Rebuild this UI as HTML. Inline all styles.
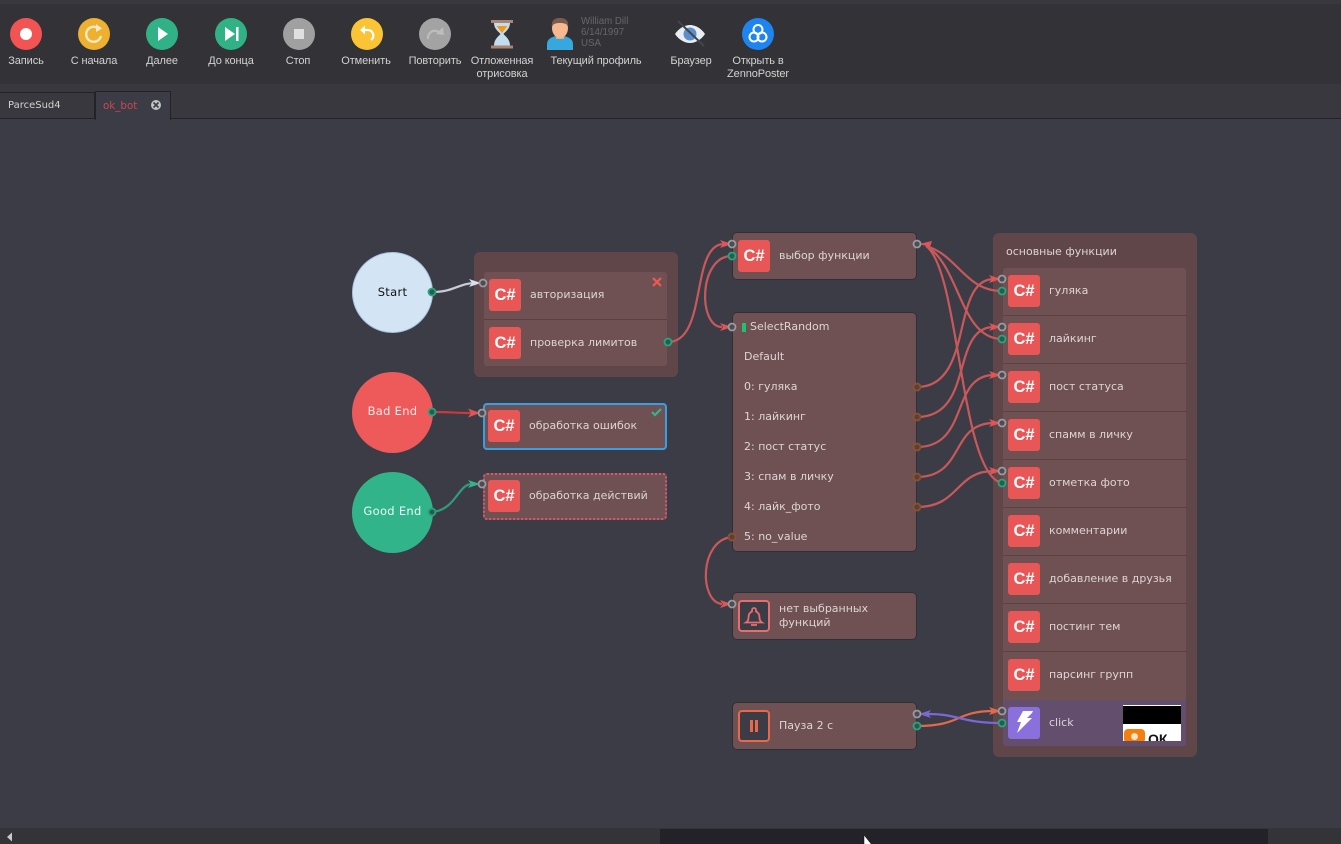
<!DOCTYPE html>
<html><head><meta charset="utf-8"><style>
html,body{margin:0;padding:0;background:#3c3c46}
#r{position:relative;width:1341px;height:844px;overflow:hidden;background:#3c3c46;font-family:"DejaVu Sans","Liberation Sans",sans-serif}
#r div{position:absolute;box-sizing:border-box}
.l{font:11px/13px "Liberation Sans",sans-serif;letter-spacing:-.1px;color:#d2d2d2;text-align:center;white-space:nowrap;transform:translateX(-50%)}
.n{background:#6f5153;border-radius:4px;box-shadow:0 0 0 1px #2f2f35}
.c{width:32px;height:32px;background:#e85656;border-radius:3px;color:#fff;font:bold 16.5px/32px "Liberation Sans",sans-serif;text-align:center}
.t{font-size:11px;line-height:14px;color:#dcd6d4;white-space:nowrap}
.circ{width:81px;height:81px;border-radius:50%;text-align:center;line-height:78px;font-size:11.5px;letter-spacing:.3px}
.d{height:1px;background:#5a4144}
</style></head><body><div id="r">
<div style="left:0;top:0;width:1341px;height:4px;background:#38383e"></div>
<div style="left:0;top:4px;width:1341px;height:80px;background:#333337"></div>
<div style="left:0;top:84px;width:1341px;height:34px;background:#38383e"></div>
<div style="left:0;top:118px;width:1341px;height:1px;background:#232327"></div>
<div style="left:0;top:92px;width:95px;height:27px;background:#38383e;border:1px solid #232327;border-left:0"></div>
<div style="left:95px;top:91px;width:76px;height:29px;background:#3c3c46;border:1px solid #232327;border-bottom:0"></div>
<div style="left:8px;top:99px;font-size:10px;line-height:14px;color:#d2d2d2">ParceSud4</div>
<div style="left:103px;top:99px;font-size:10.3px;line-height:14px;color:#c9484f">ok_bot</div>

<svg style="position:absolute;left:0;top:0" width="800" height="118">
<circle cx="26" cy="34" r="16" fill="#f25454"/><circle cx="26" cy="34" r="6" fill="#fff"/>
<circle cx="94" cy="34" r="16" fill="#edb02f"/><path d="M99 29A7.500 7.500 0 1 0 101 36" fill="none" stroke="#f6e9c8" stroke-width="2.400"/><path d="M96 24l6 4.500-6 3.500z" fill="#f6e9c8"/>
<circle cx="162" cy="34" r="16" fill="#30b286"/><path d="M158 27l10 7-10 7z" fill="#fff"/>
<circle cx="231" cy="34" r="16" fill="#30b286"/><path d="M225 27l10 7-10 7z" fill="#fff"/><rect x="236" y="27" width="2.500" height="14" fill="#fff"/>
<circle cx="299" cy="34" r="16" fill="#a0a0a0"/><rect x="294" y="29" width="10" height="10" fill="#e0e0e0"/>
<circle cx="367" cy="34" r="16" fill="#fac434"/><path d="M362 30h6a5.500 5.500 0 0 1 3 10" fill="none" stroke="#fff" stroke-width="2.300"/><path d="M365 25.500l-5 4.500 5 4.500z" fill="#fff"/>
<circle cx="435" cy="34" r="16" fill="#a3a3a3"/><path d="M428 39a7 7 0 0 1 12-6" fill="none" stroke="#bdbdbd" stroke-width="2.200"/><path d="M443 27l1 8-8-1z" fill="#bdbdbd"/>
<rect x="491" y="20" width="22" height="3" fill="#a98572"/><rect x="491" y="45.500" width="22" height="3" fill="#a98572"/>
<path d="M494 23h16c0 6-5 9-6.500 11 1.500 2 6.500 5 6.500 11.500h-16c0-6.500 5-9.500 6.500-11.500-1.500-2-6.500-5-6.500-11z" fill="#c3dcee"/><path d="M496.500 26h11l-5.500 7z" fill="#f49a16"/>
<path d="M547 50v-6c0-5 5-7 9-8h8c4 1 9 3 9 8v6z" fill="#35a8e0"/><rect x="556" y="33" width="8" height="6" fill="#eba77e"/><ellipse cx="560" cy="28" rx="8" ry="10" fill="#f6b88e"/><path d="M552 27c-1-7 3-9 8-9s9 2 8 9c-1-3-3-4-8-4s-7 1-8 4z" fill="#7a5c4c"/>
<path d="M675 34c4-6 10-9 15-9s11 3 15 9c-4 6-10 9-15 9s-11-3-15-9z" fill="#e8eef4"/><circle cx="690" cy="34" r="6.500" fill="#5d8ecb"/><path d="M678 21l26 25" stroke="#3f4650" stroke-width="2"/>
<circle cx="758" cy="34" r="16" fill="#1e84ef"/><g fill="none" stroke="#fff" stroke-width="2"><circle cx="758" cy="29.500" r="4.500"/><circle cx="754" cy="37" r="4.500"/><circle cx="762" cy="37" r="4.500"/></g>
<circle cx="156" cy="105" r="5" fill="#c4c4c4"/><path d="M153.500 102.500l5 5m0-5l-5 5" stroke="#3c3c46" stroke-width="1.600"/>
</svg>

<div class="l" style="left:26px;top:55px">Запись</div>
<div class="l" style="left:94px;top:55px">С начала</div>
<div class="l" style="left:162px;top:55px">Далее</div>
<div class="l" style="left:231px;top:55px">До конца</div>
<div class="l" style="left:298px;top:55px">Стоп</div>
<div class="l" style="left:366px;top:55px">Отменить</div>
<div class="l" style="left:435px;top:55px">Повторить</div>
<div class="l" style="left:502px;top:55px">Отложенная<br>отрисовка</div>
<div class="l" style="left:596px;top:55px">Текущий профиль</div>
<div class="l" style="left:691px;top:55px">Браузер</div>
<div class="l" style="left:758px;top:55px">Открыть в<br>ZennoPoster</div>
<div style="left:581px;top:16px;font:9.700px/11px 'Liberation Sans';color:#66666b">William Dill<br>6/14/1997<br>USA</div>

<div class="circ" style="left:352px;top:252px;background:#d3e5f5;border:1px solid #a9c4de;color:#111">Start</div>
<div class="circ" style="left:352px;top:372px;background:#ee5a5a;color:#fbe8e8">Bad End</div>
<div class="circ" style="left:352px;top:472px;background:#31b48a;color:#eafaf5">Good End</div>

<div style="left:474px;top:252px;width:204px;height:125px;background:#614649;border-radius:6px"></div>
<div style="left:484px;top:272px;width:183px;height:94px;background:#6f5153;border-radius:3px"></div>
<div class="d" style="left:484px;top:319px;width:183px"></div>
<div class="c" style="left:489px;top:279px">C#</div><div class="t" style="left:530px;top:288px">авторизация</div>
<div class="c" style="left:489px;top:327px">C#</div><div class="t" style="left:530px;top:336px">проверка лимитов</div>

<div class="n" style="left:483px;top:403px;width:184px;height:47px;border:2px solid #3a9fe2;box-shadow:none"></div>
<div class="c" style="left:488px;top:410px">C#</div><div class="t" style="left:529px;top:419px">обработка ошибок</div>
<div class="n" style="left:483px;top:473px;width:184px;height:47px;border:2px dotted #d9566f;box-shadow:none"></div>
<div class="c" style="left:488px;top:480px">C#</div><div class="t" style="left:529px;top:489px">обработка действий</div>

<div class="n" style="left:733px;top:233px;width:183px;height:46px"></div>
<div class="c" style="left:738px;top:240px">C#</div><div class="t" style="left:779px;top:249px">выбор функции</div>

<div class="n" style="left:733px;top:313px;width:183px;height:238px"></div>
<div style="left:742px;top:323px;width:4px;height:9px;background:#1fc070"></div>
<div class="t" style="left:750px;top:320px">SelectRandom</div>
<div class="t" style="left:744px;top:350px">Default</div>
<div class="t" style="left:744px;top:380px">0: гуляка</div>
<div class="t" style="left:744px;top:410px">1: лайкинг</div>
<div class="t" style="left:744px;top:440px">2: пост статус</div>
<div class="t" style="left:744px;top:470px">3: спам в личку</div>
<div class="t" style="left:744px;top:500px">4: лайк_фото</div>
<div class="t" style="left:744px;top:530px">5: no_value</div>

<div class="n" style="left:733px;top:593px;width:183px;height:46px"></div>
<div style="left:738px;top:600px;width:32px;height:32px;border:2px solid #e56f6f;border-radius:4px;background:#3c3c46"></div>
<div class="t" style="left:779px;top:602px">нет выбранных<br>функций</div>
<div class="n" style="left:733px;top:703px;width:183px;height:46px"></div>
<div style="left:738px;top:710px;width:32px;height:32px;border:2px solid #e8684a;border-radius:4px;background:#3c3c46"></div>
<div style="left:750px;top:720px;width:3px;height:12px;background:#e8684a"></div>
<div style="left:755px;top:720px;width:3px;height:12px;background:#e8684a"></div>
<div class="t" style="left:779px;top:719px">Пауза 2 с</div>

<div style="left:993px;top:233px;width:204px;height:524px;background:#614649;border-radius:6px"></div>
<div class="t" style="left:1006px;top:245px">основные функции</div>
<div style="left:1003px;top:268px;width:183px;height:432px;background:#6f5153;border-radius:3px 3px 0 0"></div>
<div style="left:1003px;top:700px;width:183px;height:46px;background:#634e6e;border-radius:0 0 3px 3px"></div>
<div class="d" style="left:1003px;top:315px;width:183px"></div>
<div class="d" style="left:1003px;top:363px;width:183px"></div>
<div class="d" style="left:1003px;top:411px;width:183px"></div>
<div class="d" style="left:1003px;top:459px;width:183px"></div>
<div class="d" style="left:1003px;top:507px;width:183px"></div>
<div class="d" style="left:1003px;top:555px;width:183px"></div>
<div class="d" style="left:1003px;top:603px;width:183px"></div>
<div class="d" style="left:1003px;top:651px;width:183px"></div>
<div class="c" style="left:1008px;top:275px">C#</div><div class="t" style="left:1049px;top:284px">гуляка</div>
<div class="c" style="left:1008px;top:323px">C#</div><div class="t" style="left:1049px;top:332px">лайкинг</div>
<div class="c" style="left:1008px;top:371px">C#</div><div class="t" style="left:1049px;top:380px">пост статуса</div>
<div class="c" style="left:1008px;top:419px">C#</div><div class="t" style="left:1049px;top:428px">спамм в личку</div>
<div class="c" style="left:1008px;top:467px">C#</div><div class="t" style="left:1049px;top:476px">отметка фото</div>
<div class="c" style="left:1008px;top:515px">C#</div><div class="t" style="left:1049px;top:524px">комментарии</div>
<div class="c" style="left:1008px;top:563px">C#</div><div class="t" style="left:1049px;top:572px">добавление в друзья</div>
<div class="c" style="left:1008px;top:611px">C#</div><div class="t" style="left:1049px;top:620px">постинг тем</div>
<div class="c" style="left:1008px;top:659px">C#</div><div class="t" style="left:1049px;top:668px">парсинг групп</div>
<div style="left:1008px;top:707px;width:32px;height:32px;background:#8a70dc;border-radius:3px"></div>
<div class="t" style="left:1049px;top:716px">click</div>
<div style="left:1123px;top:705px;width:58px;height:36px;background:#fff;overflow:hidden">
<div style="left:0;top:1px;width:58px;height:18px;background:#000"></div>
<div style="left:1px;top:24px;width:21px;height:14px;background:#f57f0d;border-radius:4px"></div>
<div style="left:8px;top:28px;width:7px;height:7px;background:#ffe3c4;border-radius:50%"></div>
<div style="left:25px;top:27px;font:bold 14px/14px 'Liberation Sans';color:#111">ОК</div>
</div>

<div style="left:0;top:828px;width:1341px;height:16px;background:#333338"></div>
<div style="left:660px;top:829px;width:608px;height:15px;background:#222228"></div>

<svg style="position:absolute;left:0;top:0" width="1341" height="844">
<g fill="none" stroke-width="2.200">
<path d="M432 292C455 292 458 283 476 283" stroke="#c8ccd6"/>
<path d="M432 412C450 412 458 413 472 413" stroke="#c93a3c"/>
<path d="M432 512C456 510 458 484 472 484" stroke="#2f9c7c"/>
<g stroke="#c9585a">
<path d="M668 342C708 342 690 244 724 244"/>
<path d="M732 256C698 256 698 327 722 327"/>
<path d="M917 387C975 387 950 279 994 279"/>
<path d="M917 417C975 417 950 327 994 327"/>
<path d="M917 447C970 447 950 375 994 375"/>
<path d="M917 477C965 477 950 423 994 423"/>
<path d="M917 507C960 507 955 471 994 471"/>
<path d="M1002 291C965 291 958 255 926 246"/>
<path d="M1002 339C960 339 960 265 926 246"/>
<path d="M1002 483C960 475 960 270 926 246"/>
<path d="M732 537C699 540 699 602 722 604"/>
</g>
<path d="M917 726C962 726 955 711 994 711" stroke="#e26a48"/>
<path d="M1002 723C960 723 960 714 928 714" stroke="#7c68d4"/>
</g>
<path d="M481 283l-12-4 3 4-3 4z" fill="#dce0ea"/>
<g fill="#e05555"><path d="M480 413l-12-4.500 3 4.500-3 4.500z"/><path d="M732 244l-12-4 3 4-3 4z"/><path d="M732 327l-12-4 3 4-3 4z"/><path d="M732 604l-12-4 3 4-3 4z"/><path d="M1001 279l-12-4 3 4-3 4z"/><path d="M1001 327l-12-4 3 4-3 4z"/><path d="M1001 375l-12-4 3 4-3 4z"/><path d="M1001 423l-12-4 3 4-3 4z"/><path d="M1001 471l-12-4 3 4-3 4z"/><path d="M919 244l13-3-2 6z"/></g>
<path d="M480 484l-12-4 3 4-3 4z" fill="#35b48c"/>
<path d="M1001 711l-12-4 3 4-3 4z" fill="#e26a48"/><path d="M919 714l12-4-3 4 3 4z" fill="#7c68d4"/>
<g fill="#4c4c52" stroke="#9a9a9f" stroke-width="1.800">
<circle cx="483" cy="283" r="3.500"/><circle cx="482" cy="413" r="3.500"/><circle cx="482" cy="484" r="3.500"/><circle cx="732" cy="244" r="3.500"/><circle cx="917" cy="244" r="3.500"/><circle cx="732" cy="327" r="3.500"/><circle cx="732" cy="604" r="3.500"/><circle cx="917" cy="714" r="3.500"/><circle cx="1002" cy="279" r="3.500"/><circle cx="1002" cy="327" r="3.500"/><circle cx="1002" cy="375" r="3.500"/><circle cx="1002" cy="423" r="3.500"/><circle cx="1002" cy="471" r="3.500"/><circle cx="1002" cy="711" r="3.500"/>
</g>
<g fill="#2c5a50" stroke="#25a67e" stroke-width="1.800">
<circle cx="432" cy="292" r="3.500"/><circle cx="432" cy="412" r="3.500"/><circle cx="432" cy="512" r="3.500"/><circle cx="668" cy="342" r="3.500"/><circle cx="732" cy="256" r="3.500"/><circle cx="917" cy="726" r="3.500"/><circle cx="1002" cy="291" r="3.500"/><circle cx="1002" cy="339" r="3.500"/><circle cx="1002" cy="483" r="3.500"/><circle cx="1002" cy="723" r="3.500"/>
</g>
<g fill="#5c4038" stroke="#8c5230" stroke-width="1.800">
<circle cx="917" cy="387" r="3.500"/><circle cx="917" cy="417" r="3.500"/><circle cx="917" cy="447" r="3.500"/><circle cx="917" cy="477" r="3.500"/><circle cx="917" cy="507" r="3.500"/><circle cx="732" cy="537" r="3.500"/>
</g>
<path d="M653 278l8 8m0-8l-8 8" stroke="#ee5a50" stroke-width="2.200"/>
<path d="M652 412l3 3 6-6" fill="none" stroke="#35b48c" stroke-width="2.200"/>
<path d="M754 608a2 2 0 0 1 2 2v1.500c2.500 1 3.500 3 3.500 6 0 2.500 1 4 2.500 5h-16c1.500-1 2.500-2.500 2.500-5 0-3 1-5 3.500-6v-1.500a2 2 0 0 1 2-2z" fill="none" stroke="#e56f6f" stroke-width="1.800"/><path d="M751 625h6" stroke="#e56f6f" stroke-width="1.800"/>
<path d="M1023 711h10l-1 2-5 5h5l-15 15 4-11h-4z" fill="#fff"/>
<path d="M12 832.500l-5 4.500 5 4.500z" fill="#c8c8c8"/>
<path d="M864 835v10h8z" fill="#fff" stroke="#111" stroke-width=".5"/>
</svg>
</div></body></html>
